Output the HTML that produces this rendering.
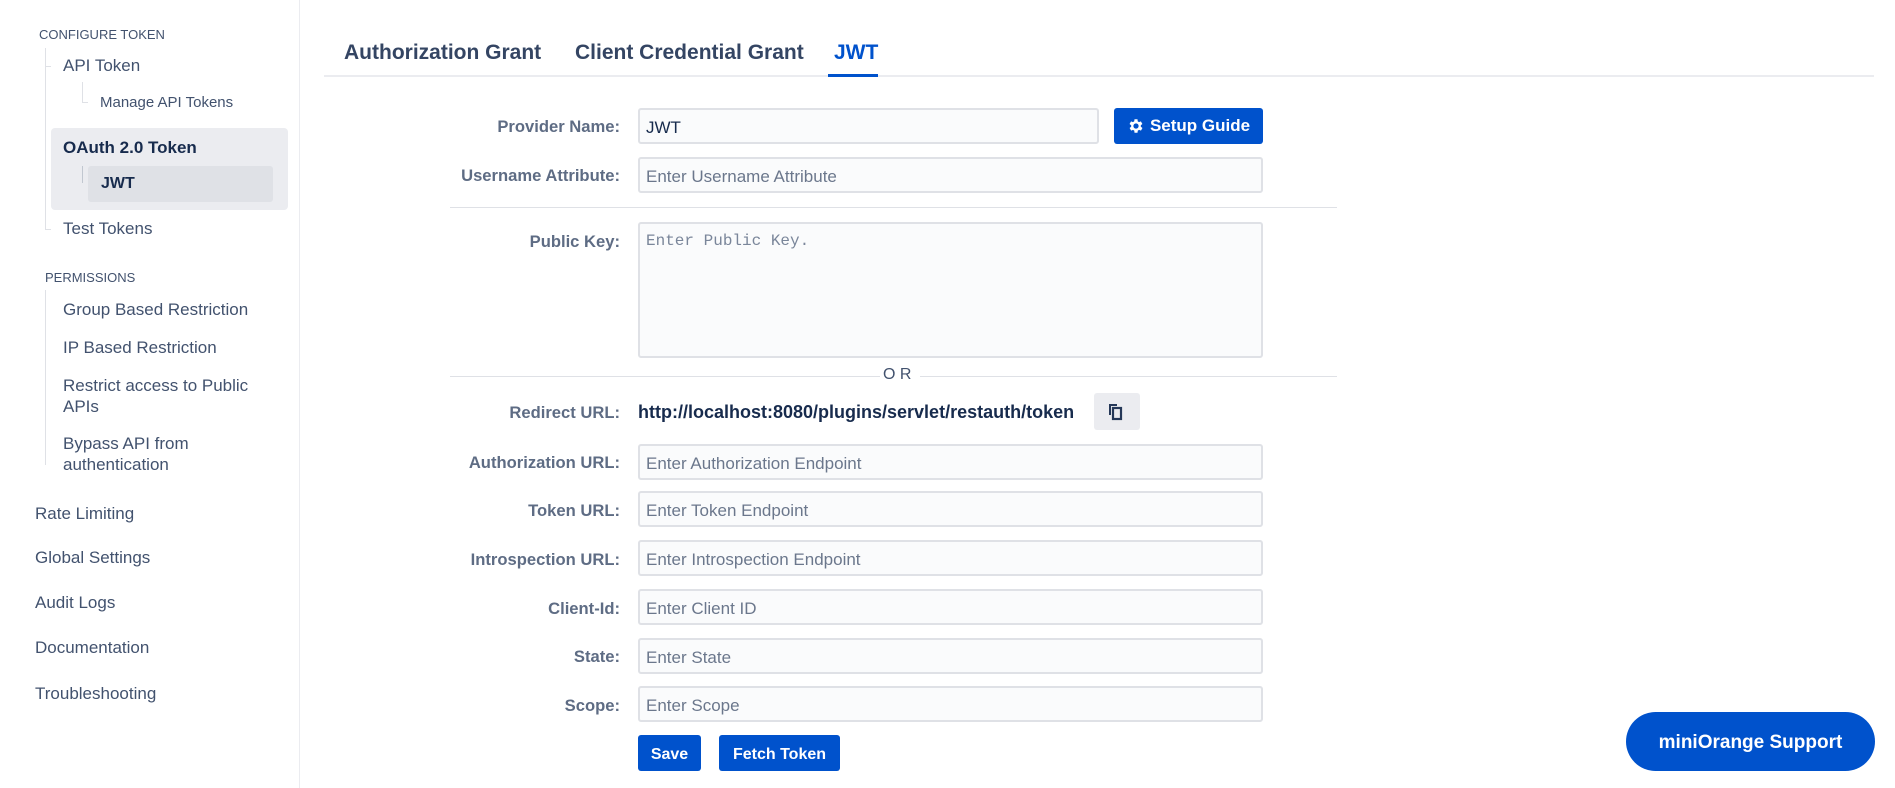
<!DOCTYPE html>
<html><head><meta charset="utf-8"><style>
*{box-sizing:border-box;margin:0;padding:0}
body{width:1895px;height:788px;overflow:hidden;background:#fff;font-family:"Liberation Sans",sans-serif;color:#172b4d;position:relative}
.a{position:absolute;white-space:nowrap}
.side{color:#42526e;font-size:17px}
.hd{font-size:13px;color:#42526e}
.ln{position:absolute;background:#dfe1e6}
.lbl{position:absolute;right:1275px;font-size:16.6px;font-weight:bold;color:#5e6c84;transform:translateY(-50%)}
.inp{position:absolute;left:638px;width:625px;height:36px;border:2px solid #dfe1e6;border-radius:3px;background:#fafbfc;font-size:17px;color:#6b778c;padding:8px 6px;white-space:nowrap}
.btn{position:absolute;background:#0052cc;color:#fff;font-weight:bold;border-radius:3px;font-size:16px;display:flex;align-items:center;justify-content:center}
</style></head><body>
<div class="a" style="left:299px;top:0;width:1px;height:788px;background:#ebecf0"></div>

<div class="a hd" style="left:39px;top:27px">CONFIGURE TOKEN</div>
<div class="ln" style="left:45px;top:48px;width:1px;height:182px"></div>
<div class="ln" style="left:45px;top:66px;width:6px;height:1px"></div>
<div class="a side" style="left:63px;top:56px">API Token</div>
<div class="ln" style="left:82px;top:82px;width:1px;height:20px"></div>
<div class="ln" style="left:82px;top:102px;width:6px;height:1px"></div>
<div class="a side" style="left:100px;top:94px;font-size:15px">Manage API Tokens</div>
<div class="a" style="left:51px;top:128px;width:237px;height:82px;background:#ebecf0;border-radius:4px"></div>
<div class="a" style="left:88px;top:166px;width:185px;height:36px;background:#dfe1e6;border-radius:3px"></div>
<div class="a side" style="left:63px;top:138px;color:#172b4d;font-weight:600">OAuth 2.0 Token</div>
<div class="ln" style="left:82px;top:166px;width:1px;height:17px;background:#c1c7d0"></div>
<div class="a side" style="left:101px;top:175px;font-size:16px;color:#172b4d;font-weight:600">JWT</div>
<div class="ln" style="left:45px;top:229px;width:6px;height:1px"></div>
<div class="a side" style="left:63px;top:219px">Test Tokens</div>

<div class="a hd" style="left:45px;top:270px">PERMISSIONS</div>
<div class="ln" style="left:45px;top:290px;width:1px;height:175px"></div>
<div class="a side" style="left:63px;top:300px">Group Based Restriction</div>
<div class="a side" style="left:63px;top:338px">IP Based Restriction</div>
<div class="a side" style="left:63px;top:375px;line-height:21px">Restrict access to Public<br>APIs</div>
<div class="a side" style="left:63px;top:433px;line-height:21px">Bypass API from<br>authentication</div>
<div class="a side" style="left:35px;top:504px">Rate Limiting</div>
<div class="a side" style="left:35px;top:548px">Global Settings</div>
<div class="a side" style="left:35px;top:593px">Audit Logs</div>
<div class="a side" style="left:35px;top:638px">Documentation</div>
<div class="a side" style="left:35px;top:684px">Troubleshooting</div>

<div class="a" style="left:324px;top:75px;width:1550px;height:2px;background:#ebecf0"></div>
<div class="a" style="left:344px;top:41px;font-size:21px;font-weight:bold;color:#344563">Authorization Grant</div>
<div class="a" style="left:575px;top:41px;font-size:21px;font-weight:bold;color:#344563">Client Credential Grant</div>
<div class="a" style="left:834px;top:41px;font-size:21px;font-weight:bold;color:#0052cc">JWT</div>
<div class="a" style="left:828px;top:74px;width:50px;height:3px;background:#0052cc"></div>

<div class="lbl" style="top:127px">Provider Name:</div>
<div class="inp" style="top:108px;width:461px;color:#172b4d">JWT</div>
<div class="btn" style="left:1114px;top:108px;width:149px;height:36px;font-size:17px"><svg width="18" height="18" viewBox="0 0 24 24" style="margin-right:5px"><path fill="#fff" d="M19.4 13a7.5 7.5 0 0 0 0-2l2.1-1.6-2-3.5-2.5 1a7.6 7.6 0 0 0-1.7-1L15 3h-4l-.4 2.9a7.6 7.6 0 0 0-1.7 1l-2.5-1-2 3.5L6.6 11a7.5 7.5 0 0 0 0 2l-2.1 1.6 2 3.5 2.5-1a7.6 7.6 0 0 0 1.7 1L11 21h4l.4-2.9a7.6 7.6 0 0 0 1.7-1l2.5 1 2-3.5zM13 15.5a3.5 3.5 0 1 1 0-7 3.5 3.5 0 0 1 0 7z" transform="translate(-1 0)"/></svg>Setup Guide</div>
<div class="lbl" style="top:176px">Username Attribute:</div>
<div class="inp" style="top:157px">Enter Username Attribute</div>
<div class="a" style="left:450px;top:207px;width:887px;height:1px;background:#dfe1e6"></div>
<div class="lbl" style="top:242px">Public Key:</div>
<div class="inp" style="top:222px;height:136px;font-family:'Liberation Mono',monospace;font-size:16px;color:#7a869a">Enter Public Key.</div>
<div class="a" style="left:450px;top:376px;width:430px;height:1px;background:#dfe1e6"></div>
<div class="a" style="left:920px;top:376px;width:417px;height:1px;background:#dfe1e6"></div>
<div class="a" style="left:883px;top:366px;font-size:16px;color:#42526e">O R</div>
<div class="lbl" style="top:413px">Redirect URL:</div>
<div class="a" style="left:638px;top:402px;font-size:18px;font-weight:bold;color:#172b4d">http://localhost:8080/plugins/servlet/restauth/token</div>
<div class="a" style="left:1094px;top:393px;width:46px;height:37px;background:#ebecf0;border-radius:3px"><svg width="46" height="37" viewBox="0 0 46 37"><rect x="19" y="15" width="8" height="11" fill="none" stroke="#253858" stroke-width="2.2"/><path d="M16 22V12h7" fill="none" stroke="#253858" stroke-width="2"/></svg></div>
<div class="lbl" style="top:463px">Authorization URL:</div>
<div class="inp" style="top:444px">Enter Authorization Endpoint</div>
<div class="lbl" style="top:511px">Token URL:</div>
<div class="inp" style="top:491px">Enter Token Endpoint</div>
<div class="lbl" style="top:560px">Introspection URL:</div>
<div class="inp" style="top:540px">Enter Introspection Endpoint</div>
<div class="lbl" style="top:609px">Client-Id:</div>
<div class="inp" style="top:589px">Enter Client ID</div>
<div class="lbl" style="top:657px">State:</div>
<div class="inp" style="top:638px">Enter State</div>
<div class="lbl" style="top:706px">Scope:</div>
<div class="inp" style="top:686px">Enter Scope</div>
<div class="btn" style="left:638px;top:735px;width:63px;height:36px;padding-top:3px">Save</div>
<div class="btn" style="left:719px;top:735px;width:121px;height:36px;padding-top:3px">Fetch Token</div>
<div class="btn" style="left:1626px;top:712px;width:249px;height:59px;border-radius:30px;font-size:19px;padding-top:3px">miniOrange Support</div>
</body></html>
